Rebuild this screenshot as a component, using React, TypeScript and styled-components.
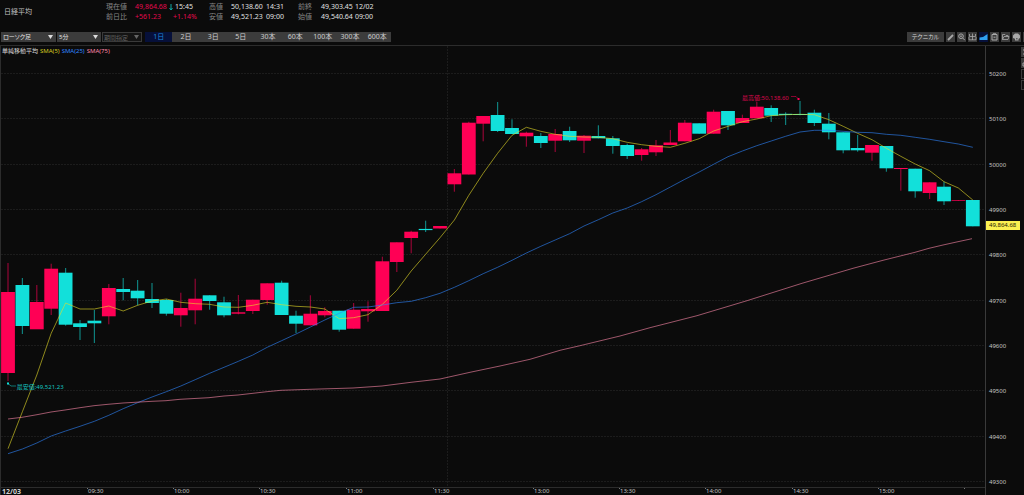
import React from "react";
import styled, { createGlobalStyle } from "styled-components";

type Tone = "up" | "down";
type Candle = [tone: Tone, top: number, bottom: number, high: number, low: number];
type Point = [number, number];

const colors = {
  bg: "#0b0b0b",
  up: "#ff0055",
  down: "#12e0da",
  text: "#d2d2d2",
  label: "#868686",
  control: "#3c3c3c",
  frame: "#2c2c2c",
};

const GlobalStyle = createGlobalStyle`
  * { box-sizing: border-box; }
  body {
    margin: 0;
    background: ${colors.bg};
    color: ${colors.text};
    font-family: "Noto Sans", "Noto Sans CJK JP", sans-serif;
    font-size: 7px;
    line-height: 10px;
    overflow: hidden;
  }
  button, select { font: inherit; color: inherit; border: 0; margin: 0; padding: 0; }
`;

const Screen = styled.div`
  display: flex;
  flex-direction: column;
  height: 100vh;
  min-height: 200px;
`;

const Header = styled.header`
  display: flex;
  flex: none;
  height: 32px;
  padding: 2px 4px;
`;

const Title = styled.h1`
  margin: 0;
  padding-top: 5px;
  width: 102px;
  font-size: 7px;
  font-weight: 400;
  color: #c0c0c0;
`;

const Quote = styled.dl<{ $columns: string }>`
  display: grid;
  grid-template-columns: ${(p) => p.$columns};
  grid-auto-rows: 10px;
  margin: 0;
  white-space: nowrap;
`;

const Term = styled.dt`
  color: ${colors.label};
`;

const Value = styled.dd<{ $rise?: boolean; $inset?: boolean }>`
  display: flex;
  align-items: center;
  gap: 2px;
  margin: 0;
  padding-left: ${(p) => (p.$inset ? 4 : 0)}px;
  color: ${(p) => (p.$rise ? "#e4094e" : "#e0e0e0")};
`;

const Toolbar = styled.div`
  display: flex;
  flex: none;
  gap: 1px;
  height: 13px;
  padding: 0 0 3px 1px;
  overflow: hidden;
`;

const Picker = styled.label<{ $width: number }>`
  position: relative;
  width: ${(p) => p.$width}px;
  height: 10px;
`;

const Select = styled.select`
  display: block;
  appearance: none;
  width: 100%;
  height: 10px;
  padding-left: 2px;
  background: ${colors.control};
  border-radius: 0;
  font-size: 6px;
  color: #e4e4e4;
  font-feature-settings: "palt";
  &:disabled {
    background: #141414;
    border: 1px solid #3a3a3a;
    padding-left: 1px;
    color: #626262;
    opacity: 1;
  }
`;

const Caret = styled.svg<{ $dim?: boolean }>`
  position: absolute;
  right: 3px;
  top: 3px;
  fill: ${(p) => (p.$dim ? "#666666" : "#dddddd")};
  pointer-events: none;
`;

const Periods = styled.div`
  display: grid;
  grid-template-columns: repeat(9, 1fr);
  width: 246px;
  height: 10px;
  margin-left: 2px;
`;

const Period = styled.button<{ $active?: boolean }>`
  background: ${(p) => (p.$active ? "#06103a" : colors.control)};
  color: ${(p) => (p.$active ? "#1c8ad8" : "#cccccc")};
  line-height: 10px;
`;

const Tools = styled.div`
  display: flex;
  gap: 2px;
  margin-left: auto;
  margin-right: -8px;
`;

const Technical = styled.button`
  width: 37px;
  height: 10px;
  background: ${colors.control};
  font-size: 6px;
  line-height: 10px;
  font-feature-settings: "palt";
`;

const Tool = styled.button<{ $active?: boolean; $outline?: boolean }>`
  display: grid;
  place-items: center;
  flex: none;
  width: 9px;
  height: 10px;
  background: ${(p) => (p.$active ? "#06103a" : p.$outline ? "#101010" : colors.control)};
  ${(p) => p.$outline && "border: 1px solid #3a3a3a;"}
  svg {
    fill: none;
    stroke: #a8a8a8;
    stroke-width: 1;
  }
`;

const Workspace = styled.main`
  display: flex;
  flex: 1;
  min-height: 0;
  border-top: 1px solid ${colors.frame};
  font-size: 6px;
  line-height: 8px;
`;

const ChartColumn = styled.section`
  display: flex;
  flex-direction: column;
  flex: 1;
  min-width: 0;
  border-left: 1px solid ${colors.frame};
`;

const Plot = styled.div`
  position: relative;
  flex: 1;
  min-height: 0;
`;

const Drawing = styled.svg`
  position: absolute;
  inset: 0;
  width: 100%;
  height: 100%;
`;

const Legend = styled.div`
  position: absolute;
  left: 1px;
  top: 1px;
  display: flex;
  gap: 2px;
`;

const LegendItem = styled.span<{ $color: string }>`
  color: ${(p) => p.$color};
`;

const Callout = styled.span<{ $x: number; $y: number; $color: string }>`
  position: absolute;
  left: ${(p) => p.$x}%;
  top: ${(p) => p.$y}%;
  color: ${(p) => p.$color};
  white-space: nowrap;
`;

const TimeAxis = styled.div`
  display: grid;
  flex: none;
  grid-template-columns: 86fr 86fr 86fr 87fr 87fr 100fr 86fr 86fr 87fr 86fr 86fr 21fr;
  height: 8px;
  border-top: 1px solid ${colors.frame};
`;

const Time = styled.span<{ $first?: boolean }>`
  padding-left: 1px;
  line-height: 7px;
  font-size: ${(p) => (p.$first ? 7 : 6)}px;
  font-weight: ${(p) => (p.$first ? 700 : 400)};
  background: ${(p) => (p.$first ? "none" : "linear-gradient(#777777, #777777) 0 0 / 1px 1px no-repeat")};
  color: ${(p) => (p.$first ? "#d2d2d2" : "#c4c4c4")};
`;

const PriceAxis = styled.aside`
  position: relative;
  display: flex;
  flex-direction: column;
  justify-content: space-between;
  flex: none;
  width: 39px;
  padding: 24px 0 9px 3px;
  border-left: 1px solid #3a3a3a;
  color: #c4c4c4;
`;

const LastPrice = styled.output`
  position: absolute;
  left: 0;
  top: 39%;
  padding: 0 4px 0 3px;
  background: #fbf050;
  color: #1c1a06;
  line-height: 9px;
`;

const SideTools = styled.div`
  position: absolute;
  right: 0;
  top: 1px;
  display: grid;
  gap: 1px;
  width: 3px;
  overflow: hidden;
`;

const candles: Candle[] = [
  ["up", 292, 373, 263, 381], ["down", 285, 326, 278, 334], ["up", 302, 329.3, 285, 329],
  ["up", 268.7, 308.7, 263.7, 315], ["down", 272.7, 324.7, 268, 325.7], ["down", 323.3, 327, 320, 340],
  ["down", 320.7, 323.3, 310, 343], ["up", 288, 316.3, 284, 324.3], ["down", 289, 292, 278, 300.3],
  ["down", 290.7, 298.3, 280, 305.3], ["down", 299, 303, 283, 308], ["down", 300, 313.7, 299, 315.7],
  ["up", 308, 315.3, 292.7, 326.7], ["up", 298.7, 310.3, 278.7, 324.3], ["down", 295.3, 301, 295.3, 309.7],
  ["down", 302.3, 315.3, 296.7, 317.3], ["up", 312.3, 313.7, 295, 314.3], ["up", 299.7, 311, 299.7, 314],
  ["up", 283.3, 300, 283.3, 304.7], ["down", 282.7, 315, 280.7, 315], ["down", 315.7, 323.7, 310.7, 333],
  ["up", 313.7, 325.3, 295.3, 325.3], ["up", 311, 315.3, 307.3, 317.3], ["down", 310.7, 329.7, 310.7, 331.7],
  ["up", 309.7, 328.7, 303, 328.7], ["up", 309, 311.3, 301.3, 321.7], ["up", 261.3, 311, 256.7, 311],
  ["up", 242.3, 262, 242.3, 272], ["up", 231.7, 238, 230.7, 253.3], ["down", 228.9, 230.1, 220.7, 232],
  ["up", 226, 228.5, 226, 228.5], ["up", 173.3, 184.3, 169, 191.7], ["up", 122.7, 174.5, 121.7, 174.5],
  ["up", 116, 123.7, 116, 141.3], ["down", 115, 131, 102, 132], ["down", 128, 134, 119.3, 134],
  ["up", 132.7, 136.3, 131.7, 146.7], ["down", 136, 143, 133, 148], ["up", 134, 140.7, 129, 152],
  ["down", 131, 140.3, 126.7, 142], ["up", 135.7, 140.7, 135, 153], ["down", 136, 138.3, 125.3, 138.3],
  ["down", 138.3, 146, 136, 153.7], ["down", 145, 156, 143.7, 159], ["up", 149.3, 155, 148, 160.7],
  ["up", 145.3, 152.3, 140, 156], ["up", 142.5, 145, 130, 145], ["up", 122.7, 141.3, 120, 141.3],
  ["down", 123.3, 133.7, 123.3, 133.7], ["up", 111.7, 133.7, 109.7, 133.7], ["down", 111, 125.3, 111, 130],
  ["up", 118, 123, 114.7, 123], ["up", 106.7, 118.3, 101.7, 118.3], ["down", 108, 115.7, 105.3, 122],
  ["down", 113.8, 115, 112.3, 125], ["down", 114, 115, 101, 115.3], ["down", 112.7, 123, 109.7, 126],
  ["down", 123.7, 132.3, 113, 139.3], ["down", 132.3, 150.3, 132.3, 153.3], ["down", 148, 150.3, 135, 151.7],
  ["up", 145, 152.7, 145, 160.7], ["down", 146, 168.3, 146, 171.7], ["up", 168, 169, 168, 190.7],
  ["down", 168.7, 191.3, 168.7, 197.7], ["up", 182.3, 193, 182.3, 199], ["down", 186.7, 201.3, 181.7, 205],
  ["up", 200, 200.7, 200, 200.7], ["down", 200, 226.3, 200, 226.3],
];

const sma5 = [
  448.7, 411.7, 375, 333.3, 303, 309, 309, 306, 311, 305.3, 301, 299, 302.3, 303.7, 304.3, 307, 307.3,
  305.3, 302.3, 304.7, 306.3, 307, 309, 318.7, 317.7, 314.7, 304.3, 290.3, 271, 254.3, 237.7, 220, 195.3,
  173.3, 153.3, 135.3, 127.3, 131.3, 134.3, 136.3, 137, 137.3, 138.7, 142.3, 144.7, 146.3, 147.3, 143.3,
  138.7, 131, 126.3, 121.7, 119, 115.7, 114.7, 114.3, 114.7, 119.7, 126.3, 133.3, 139.7, 148.3,
  156.3, 164, 170.7, 181.7, 188, 200,
];

const sma25 = [
  453.7, 449, 443, 436, 431, 426.3, 421.3, 415.3, 408.7, 402.7, 397, 391.7, 386, 379.7, 373.3, 367.3,
  361.3, 355, 347.3, 340.7, 334, 327, 320, 313.3, 307.3, 307, 305, 302.7, 301.3, 297.7, 293.3, 287.3,
  280.7, 273.7, 267.3, 260.3, 253, 246.3, 240, 233.7, 226, 219.7, 213, 208, 201.7, 194.7, 187, 179.3,
  172, 164.3, 156.7, 151, 145.7, 141, 136.3, 132, 130.3, 130.3, 131.3, 132.3, 132.7, 134.3, 135.3, 137.3,
  139.3, 141.7, 144, 147.3,
];

const sma75: Point[] = [
  [8, 419], [22, 417.3], [37, 414.7], [51, 412], [65, 410], [80, 407.7], [94, 405.7], [108, 404.3],
  [123, 403], [152, 401.3], [166, 400.7], [180, 399.3], [209, 397.7], [224, 396], [238, 395], [267, 391.7],
  [281, 390.3], [310, 389.3], [353, 388], [382, 386], [411, 382.3], [440, 379], [470, 372.3], [500, 366],
  [530, 359.3], [560, 350.3], [580, 345.7], [620, 336], [650, 327.7], [697, 315.7], [747, 300.7],
  [802, 283.3], [853, 268.3], [883, 260.3], [915, 252.3], [929, 248.3], [943, 245], [958, 241.7], [972, 238.7],
];

const centre = (i: number) => 8 + i * 14.4;
const spread = (ys: number[]): Point[] => ys.map((y, i) => [centre(i), y]);
const toPoints = (points: Point[]) => points.map((p) => p.join(",")).join(" ");

const prices = [50200, 50100, 50000, 49900, 49800, 49700, 49600, 49500, 49400, 49300];
const times = ["12/03", "09:30", "10:00", "10:30", "11:00", "11:30", "13:00", "13:30", "14:00", "14:30", "15:00", ""];
const periods = ["1日", "2日", "3日", "5日", "30本", "60本", "100本", "300本", "600本"];

const averages = [
  { color: "#e6dc28", points: spread(sma5) },
  { color: "#2f86ff", points: spread(sma25) },
  { color: "#ff88aa", points: sma75 },
];

function PriceChart() {
  return (
    <Drawing viewBox="1 46 984 441" preserveAspectRatio="none" role="img" aria-label="日経平均 5分足">
      <g stroke="#1c1c1c" strokeDasharray="2 1">
        {prices.map((price, i) => (
          <line key={price} x1={1} x2={985} y1={Math.round(73 + i * 45.35) + 0.5} y2={Math.round(73 + i * 45.35) + 0.5} />
        ))}
        <line x1={447.5} x2={447.5} y1={46} y2={487} />
      </g>
      {candles.map(([tone, top, bottom, high, low], i) => (
        <g key={i} fill={colors[tone]}>
          <rect x={centre(i) - 0.6} y={high} width={1.2} height={low - high} opacity={0.55} />
          <rect x={centre(i) - 6.9} y={top} width={13.8} height={bottom - top} />
        </g>
      ))}
      {averages.map(({ color, points }) => (
        <polyline key={color} points={toPoints(points)} fill="none" stroke={color} strokeOpacity={0.6} />
      ))}
      <polyline points="8,383.5 11,386 16,386" fill="none" stroke={colors.down} strokeOpacity={0.5} />
      <rect x={7} y={382.5} width={2} height={2} fill={colors.down} />
      <polyline points="791,96.5 796,96.5 798,98.5" fill="none" stroke={colors.up} strokeOpacity={0.5} />
      <rect x={797.5} y={98} width={2} height={2} fill={colors.up} />
    </Drawing>
  );
}

function Dropdown({ label, value, width, disabled }: { label: string; value: string; width: number; disabled?: boolean }) {
  return (
    <Picker $width={width}>
      <Select aria-label={label} disabled={disabled} defaultValue={value}>
        <option>{value}</option>
      </Select>
      <Caret $dim={disabled} width="5" height="4" viewBox="0 0 5 4">
        <path d="M0 0H5L2.5 4Z" />
      </Caret>
    </Picker>
  );
}

const Glyph = ({ children }: { children: React.ReactNode }) => (
  <svg width="9" height="10" viewBox="0 0 9 10" aria-hidden="true">{children}</svg>
);

export default function App() {
  return (
    <Screen>
      <GlobalStyle />
      <Header>
        <Title>日経平均</Title>
        <Quote $columns="29px 34px 40px">
          <Term>現在値</Term>
          <Value $rise>49,864.68</Value>
          <Value>
            <svg width="4" height="8" viewBox="0 0 4 8" fill="none" stroke="#10a8a4">
              <path d="M2 1V7M0.5 5L2 7L3.5 5" />
            </svg>
            15:45
          </Value>
          <Term>前日比</Term>
          <Value $rise>+561.23</Value>
          <Value $rise $inset>+1.14%</Value>
        </Quote>
        <Quote $columns="22px 35px 32px">
          <Term>高値</Term><Value>50,138.60</Value><Value>14:31</Value>
          <Term>安値</Term><Value>49,521.23</Value><Value>09:00</Value>
        </Quote>
        <Quote $columns="23px 34px 32px">
          <Term>前終</Term><Value>49,303.45</Value><Value>12/02</Value>
          <Term>始値</Term><Value>49,540.64</Value><Value>09:00</Value>
        </Quote>
      </Header>

      <Toolbar>
        <Dropdown label="チャート種別" value="ローソク足" width={55} />
        <Dropdown label="足種" value="5分" width={44} />
        <Dropdown label="期間" value="期間指定" width={40} disabled />
        <Periods>
          {periods.map((p, i) => (
            <Period key={p} type="button" $active={i === 0}>{p}</Period>
          ))}
        </Periods>
        <Tools>
          <Technical type="button">テクニカル</Technical>
          <Tool type="button" aria-label="描画">
            <Glyph><path d="M2 8L7 3" strokeWidth="1.8" /></Glyph>
          </Tool>
          <Tool type="button" aria-label="拡大">
            <Glyph><circle cx="4" cy="4.2" r="2.3" /><path d="M3 4.2H5M5.7 6L7.8 8.2" /></Glyph>
          </Tool>
          <Tool type="button" aria-label="分割">
            <Glyph><path d="M1.5 2V4.5H7.5V2M4.5 1.5V8M1 5V7.8H8V5" strokeWidth="0.8" /></Glyph>
          </Tool>
          <Tool type="button" aria-label="エリア" $active>
            <Glyph><path d="M0.5 8V5.5L4 5L8.5 2V8Z" fill="#2fa0f0" stroke="none" /></Glyph>
          </Tool>
          <Tool type="button" aria-label="保存">
            <Glyph><path d="M2 2.5H7V8H2ZM3 1.8H6M3.5 5.2H5.5" /></Glyph>
          </Tool>
          <Tool type="button" aria-label="開く">
            <Glyph><path d="M1.5 7.5V2.5H4L5 3.5H7V4.5M1.5 7.5L3 4.5H8L7 7.5Z" strokeWidth="0.8" /></Glyph>
          </Tool>
          <Tool type="button" aria-label="印刷">
            <Glyph>
              <path d="M3 1.5H6L8 3.5V6L6.5 7V8.5H3V6.8L1 6V3.5Z" fill="#a8a8a8" stroke="none" />
              <path d="M4 6.8H5.6" stroke="#3c3c3c" />
            </Glyph>
          </Tool>
          <Tool type="button" aria-label="その他" />
        </Tools>
      </Toolbar>

      <Workspace>
        <ChartColumn>
          <Plot>
            <PriceChart />
            <Legend>
              <LegendItem $color="#d8d8d8">単純移動平均</LegendItem>
              <LegendItem $color="#d4cc20">SMA(5)</LegendItem>
              <LegendItem $color="#2f86ff">SMA(25)</LegendItem>
              <LegendItem $color="#ff88aa">SMA(75)</LegendItem>
            </Legend>
            <Callout $x={75.3} $y={10.8} $color="#dc084e">最高値:50,138.60</Callout>
            <Callout $x={1.6} $y={76.4} $color="#14c4c0">最安値:49,521.23</Callout>
          </Plot>
          <TimeAxis>
            {times.map((t, i) => (
              <Time key={i} $first={i === 0}>{t}</Time>
            ))}
          </TimeAxis>
        </ChartColumn>
        <PriceAxis>
          {prices.map((p) => <span key={p}>{p}</span>)}
          <LastPrice>49,864.68</LastPrice>
          <SideTools>
            <Tool type="button" aria-label="上へ"><Glyph><path d="M2 3H7M2 7H7" /></Glyph></Tool>
            <Tool type="button" aria-label="固定"><Glyph><path d="M2 5H7V8H2Z" /></Glyph></Tool>
            <Tool type="button" aria-label="縮小" $outline />
            <Tool type="button" aria-label="移動" $outline />
          </SideTools>
        </PriceAxis>
      </Workspace>
    </Screen>
  );
}
